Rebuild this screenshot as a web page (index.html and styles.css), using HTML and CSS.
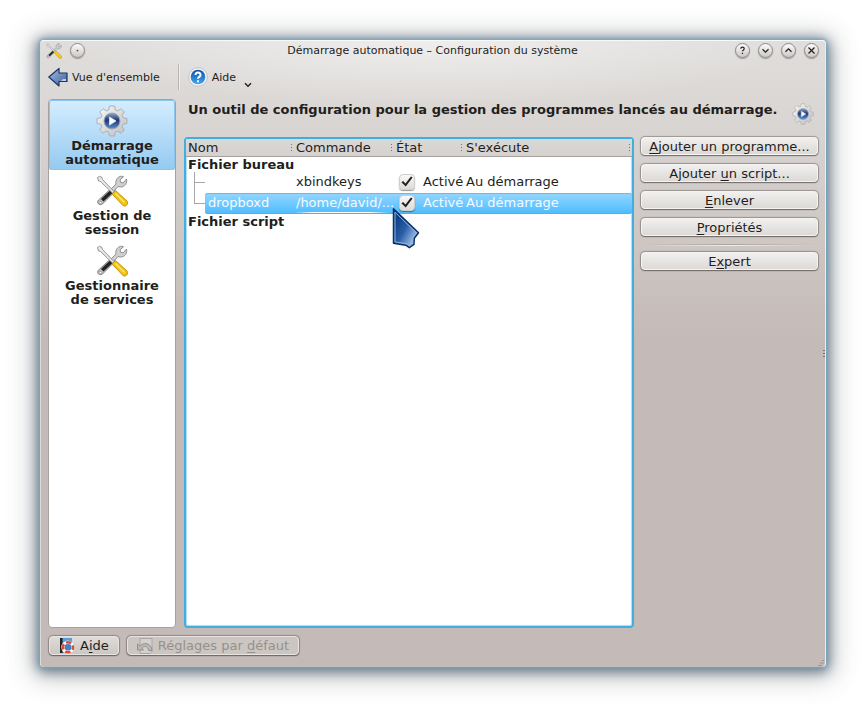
FILE: index.html
```html
<!DOCTYPE html>
<html lang="fr">
<head>
<meta charset="utf-8">
<title>Démarrage automatique – Configuration du système</title>
<link rel="stylesheet" href="styles.css">
</head>
<body>
<svg class="defs" aria-hidden="true">
  <defs>
    <linearGradient id="metal" x1="0" y1="0" x2="1" y2="1"><stop offset="0" stop-color="#fafafa"/><stop offset="1" stop-color="#bdbdbd"/></linearGradient>
    <linearGradient id="orb" x1="0" y1="0" x2="0" y2="1"><stop offset="0" stop-color="#8fa5c8"/><stop offset=".45" stop-color="#1d3a72"/><stop offset="1" stop-color="#5f8fd0"/></linearGradient>
    <linearGradient id="arrow" x1="0" y1="0" x2="1" y2="1"><stop offset="0" stop-color="#a8bfe2"/><stop offset="1" stop-color="#3a5d9c"/></linearGradient>
    <linearGradient id="help" x1="0" y1="0" x2="0" y2="1"><stop offset="0" stop-color="#0d4fa5"/><stop offset="1" stop-color="#3fa9f5"/></linearGradient>
    <linearGradient id="pointer" x1=".1" y1=".3" x2=".8" y2=".9"><stop offset="0" stop-color="#0d4288"/><stop offset=".45" stop-color="#2a5fa6"/><stop offset="1" stop-color="#a9c6ec"/></linearGradient>
  </defs>
  <symbol id="gear" viewBox="0 0 32 32">
    <path d="M13.500 1h5l.8 4 2.300 1 3.400-2.300L28.300 7 26 10.400l1 2.300 4 .8v5l-4 .8-1 2.300 2.300 3.400-3.300 3.300-3.400-2.300-2.300 1-.8 4h-5l-.8-4-2.300-1L7 28.300 3.700 25 6 21.600l-1-2.300-4-.8v-5l4-.8 1-2.300L3.700 7 7 3.700 10.400 6l2.300-1z" fill="url(#metal)" stroke="#aaa" stroke-width=".9" stroke-linejoin="round"/>
    <circle cx="16" cy="16" r="8" fill="url(#orb)" stroke="#9aa6ba" stroke-width="1"/>
    <path d="M13.500 12l6.500 4-6.500 4z" fill="#fff" stroke="#dfe8f5" stroke-width=".8" stroke-linejoin="round"/>
  </symbol>
  <symbol id="tools" viewBox="0 0 32 32">
    <path d="M3.500 29.500a2.600 2.600 0 0 1-1-4.500L15 13.500l3.500 3.500L6.500 29a2.600 2.600 0 0 1-3 .5z" fill="#bbb" stroke="#777" stroke-width=".8"/>
    <path d="M5 24l9-8.500 2.500 2.500-9 8.500z" fill="#222"/>
    <circle cx="4.300" cy="27.600" r="1.200" fill="#fff" stroke="#888" stroke-width=".6"/>
    <path d="M15 14l5-5c-.8-4 1.500-7.500 5.800-7.800l1.700.6-3.500 3 .6 2.500 2.500.7L30.500 4c1 4-1.500 8-6 8l-2.500-.5-4.500 5z" fill="#d0d0d0" stroke="#858585" stroke-width=".9" stroke-linejoin="round"/>
    <path d="M1.500 2.500l2-1.200 2.500 1.200.5 2L18.500 17 17 18.500 4.500 6.500l-2-.5z" fill="#e8e8e8" stroke="#8a8a8a" stroke-width=".9"/>
    <path d="M16 19l3.500-3.500L31 26c1.500 2.200 0 5.500-3.500 5z" fill="#f3c40c" stroke="#b88a08" stroke-width=".9"/>
    <path d="M19.500 18.500l9 9" stroke="#ffe97a" stroke-width="1.200"/>
  </symbol>
</svg>

<div class="window">
  <header class="titlebar">
    <div class="controls">
      <svg class="icon-16"><use href="#tools"/></svg>
      <button class="round" aria-label="Menu"><svg viewBox="0 0 15 15"><circle cx="7.500" cy="7.500" r=".3"/></svg></button>
    </div>
    <h1>Démarrage automatique – Configuration du système</h1>
    <div class="controls end">
      <button class="round" aria-label="Aide contextuelle"><svg viewBox="0 0 15 15"><path d="M5.500 5.500c0-2.500 4-2.500 4 0 0 1.300-2 1.500-2 3M7.500 10v1.500"/></svg></button>
      <button class="round" aria-label="Réduire"><svg viewBox="0 0 15 15"><path d="M4 6l3.500 3.500L11 6"/></svg></button>
      <button class="round" aria-label="Agrandir"><svg viewBox="0 0 15 15"><path d="M4 9l3.500-3.500L11 9"/></svg></button>
      <button class="round" aria-label="Fermer"><svg viewBox="0 0 15 15"><path d="M4 4l7 7M11 4l-7 7"/></svg></button>
    </div>
  </header>

  <nav class="toolbar">
    <button class="tool"><svg class="icon-20" viewBox="0 0 20 20"><path d="M.8 10L11 1.500V6h8v8.500h-8V19z" fill="url(#arrow)" stroke="#1d3565" stroke-width="1.200" stroke-linejoin="round"/><path d="M13 14l2-2h3v2z" fill="#b9cfee"/></svg>Vue d'ensemble</button>
    <span class="divider"></span>
    <button class="tool"><svg class="icon-20" viewBox="0 0 20 20"><circle cx="10" cy="10" r="9.300" fill="#f4f4f4" stroke="#b9b9b9" stroke-width=".8"/><circle cx="10" cy="10" r="7.300" fill="url(#help)"/><path d="M7.500 8c0-3.400 5-3.200 5 0 0 1.900-2.500 1.900-2.500 3.800M10 13.200v2" fill="none" stroke="#fff" stroke-width="2"/></svg>Aide<svg class="caret" viewBox="0 0 8 6"><path d="M1 1.200l3 3 3-3" fill="none" stroke="#222" stroke-width="1.500"/></svg></button>
  </nav>

  <div class="body">
    <nav class="sidebar">
      <a href="#demarrage" class="module current"><svg class="icon-32"><use href="#gear"/></svg>Démarrage automatique</a>
      <a href="#session" class="module"><svg class="icon-32"><use href="#tools"/></svg>Gestion de session</a>
      <a href="#services" class="module"><svg class="icon-32"><use href="#tools"/></svg>Gestionnaire de services</a>
    </nav>

    <main class="content">
      <div class="heading">
        <h2>Un outil de configuration pour la gestion des programmes lancés au démarrage.</h2>
        <svg class="icon-22"><use href="#gear"/></svg>
      </div>
      <div class="panes">
        <div class="list">
          <table>
            <colgroup><col class="c-name"><col class="c-command"><col class="c-state"><col></colgroup>
            <thead>
              <tr><th>Nom</th><th>Commande</th><th>État</th><th>S'exécute</th></tr>
            </thead>
            <tbody>
              <tr class="group"><th colspan="4">Fichier bureau</th></tr>
              <tr class="entry">
                <td class="branch"></td><td>xbindkeys</td>
                <td><label class="state"><input type="checkbox" checked>Activé</label></td><td>Au démarrage</td>
              </tr>
              <tr class="entry selected">
                <td class="branch last"><span class="name">dropboxd</span></td><td class="command">/home/david/...</td>
                <td><label class="state"><input type="checkbox" checked>Activé</label></td><td>Au démarrage</td>
              </tr>
              <tr class="group"><th colspan="4">Fichier script</th></tr>
            </tbody>
          </table>
          <svg class="pointer" viewBox="0 0 28 44"><path d="M1.500 1.800L26.500 25.700l-4.200 5.600-.3 6-4.700 3.400-3.500-2.500-12.300-2z" fill="url(#pointer)" stroke="#0b2f63" stroke-width="1.500" stroke-linejoin="round"/><path d="M3 5.200L24.400 25.800l-3.600 5-.3 5.700-3.200 2.300-2.900-2L3 34.900z" fill="none" stroke="#8fb2e0" stroke-width="1"/></svg>
        </div>
        <div class="actions">
          <button class="btn"><span><u>A</u>jouter un programme...</span></button>
          <button class="btn"><span>Ajouter <u>u</u>n script...</span></button>
          <button class="btn"><span><u>E</u>nlever</span></button>
          <button class="btn"><span><u>P</u>ropriétés</span></button>
          <hr>
          <button class="btn"><span>E<u>x</u>pert</span></button>
        </div>
      </div>
    </main>
  </div>

  <footer class="footer">
    <button class="btn"><svg class="icon-16" viewBox="0 0 16 16"><path d="M1 0h12v15H1z" fill="#5b9bdc"/><path d="M1 0h2.500v15H1z" fill="#222"/><circle cx="9" cy="9.200" r="5" fill="#3f82cc" stroke="#c9c9c9" stroke-width="3.400"/><circle cx="9" cy="9.200" r="5" fill="none" stroke="#fff" stroke-width="2.800"/><circle cx="9" cy="9.200" r="5" fill="none" stroke="#e04a35" stroke-width="2.600" stroke-dasharray="5.400 2.454" stroke-dashoffset="2.700"/></svg><span>A<u>i</u>de</span></button>
    <button class="btn" disabled><svg class="icon-16" viewBox="0 0 16 16"><path d="M3 .5h12v13l-2 2H3z" fill="#d4d0ce" stroke="#aaa6a3"/><path d="M.5 6v6h6L4.700 10c2.500-2.500 6-2 7 2.500H15C14.500 5.500 7 3.500 2.800 8z" fill="#bcb8b5" stroke="#8e8a87" stroke-width=".9" stroke-linejoin="round"/></svg><span>Réglages par <u>d</u>éfaut</span></button>
  </footer>
  <span class="edge"></span>
  <svg class="grip" viewBox="0 0 6 6"><path d="M5 0v1M3 2.500v1M5 2.500v1M1 5v1M3 5v1" stroke="#776f6c" stroke-width="1"/></svg>
</div>
</body>
</html>
```
FILE: styles.css
```css
* { box-sizing: border-box; }

body {
  margin: 0;
  padding: 40px;
  background: #fff;
  color: #221e1c;
  font: 13px/15px "DejaVu Sans", sans-serif;
}

button { font: inherit; color: inherit; }
h1, h2 { margin: 0; }
.defs { position: absolute; width: 0; height: 0; }
.icon-16 { width: 16px; height: 16px; }
.icon-20 { width: 20px; height: 20px; }
.icon-22 { width: 22px; height: 22px; }
.icon-32 { width: 32px; height: 32px; }

.window {
  position: relative;
  display: flex;
  flex-direction: column;
  min-height: calc(100vh - 80px);
  border-radius: 4px;
  border-top: 1px solid #f8f8f7;
  border-right: 1px solid #eeebea;
  border-left: 1px solid #dedad8;
  background:
    radial-gradient(ellipse 360px 64px at 50% 0, #efeeed, rgba(239, 238, 237, 0)),
    linear-gradient(#e0dedc, #d6d2cf 110px, #c4bab7 300px);
  box-shadow: 0 0 3px 1px #6eabc8, 0 2px 12px 3px rgba(35, 60, 85, .6), 0 3px 26px 8px rgba(60, 65, 70, .3);
}

.titlebar {
  display: grid;
  grid-template-columns: 1fr auto 1fr;
  align-items: center;
  height: 19px;
  padding: 0 6px 0 5px;
}
.titlebar h1 { font-size: 11px; font-weight: 400; }
.controls { display: flex; align-items: center; gap: 8px; }
.end { justify-content: flex-end; }
.round {
  width: 15px;
  height: 15px;
  padding: 0;
  border: 1px solid #8d8987;
  border-radius: 50%;
  background: linear-gradient(#fbfbfa, #cbc8c6);
  box-shadow: 0 1px 1px rgba(0, 0, 0, .3);
}
.round svg { display: block; width: 13px; height: 13px; fill: none; stroke: #222; stroke-width: 1.4px; }

.toolbar { display: flex; align-items: center; height: 34px; padding-left: 7px; font-size: 11px; }
.tool { display: flex; align-items: center; gap: 4px; padding: 0; border: 0; background: none; }
.divider { width: 2px; height: 26px; margin: 0 8px 0 18px; border-left: 1px solid #b9b5b2; border-right: 1px solid #efeeed; }
.caret { width: 8px; height: 6px; margin: 16px 0 0 4px; }

.body { flex: 1; display: flex; gap: 8px; padding: 5px 7px 8px; }

.sidebar {
  flex: 0 0 128px;
  border: 1px solid #a7a19e;
  border-radius: 4px;
  background: #fff;
}
.module {
  display: flex;
  flex-direction: column;
  align-items: center;
  height: 70px;
  padding: 5px 10px 0;
  border-radius: 3px;
  color: inherit;
  font-weight: 700;
  line-height: 14px;
  text-align: center;
  text-decoration: none;
}
.module svg { flex: none; margin-bottom: 2px; }
.current { background: linear-gradient(#d5edff, #94caf0); box-shadow: inset 0 0 0 1px #8cc5ee; }

.content { flex: 1; min-width: 0; display: flex; flex-direction: column; }
.heading { display: flex; justify-content: space-between; height: 38px; padding: 3px 4px 0; }
.heading h2 { font-size: 13px; line-height: 15px; }
.heading svg { flex: none; margin-top: 1px; }
.panes { flex: 1; display: flex; gap: 7px; }

.list {
  position: relative;
  flex: 1;
  border: 2px solid #43addf;
  border-radius: 4px;
  background: #fff;
  box-shadow: inset 0 0 1px 1px #a9def7;
}
table { width: 100%; table-layout: fixed; border-spacing: 0; }
.c-name { width: 108px; }
.c-command { width: 100px; }
.c-state { width: 70px; }
th, td { padding: 0 0 0 2px; text-align: left; white-space: nowrap; }
thead th {
  position: relative;
  height: 18px;
  border-bottom: 1px solid #a5a19f;
  background: linear-gradient(#cfdde3, #dad6d3 4px, #d5d1ce);
  font-weight: 400;
}
thead th::after {
  content: "";
  position: absolute;
  top: 5px;
  right: 2px;
  width: 1px;
  height: 8px;
  background: repeating-linear-gradient(#77716e 0 1px, transparent 1px 3px);
}
.group th { height: 15px; font-weight: 700; }
.entry td { height: 21px; padding-bottom: 2px; }
.entry .branch {
  padding: 0;
  background:
    linear-gradient(#aaa6a4, #aaa6a4) 8px 0 / 1px 100% no-repeat,
    linear-gradient(#aaa6a4, #aaa6a4) 8px 10px / 11px 1px no-repeat;
}
.entry .last {
  padding-left: 19px;
  background:
    linear-gradient(#aaa6a4, #aaa6a4) 8px 0 / 1px 10px no-repeat,
    linear-gradient(#aaa6a4, #aaa6a4) 8px 10px / 11px 1px no-repeat;
}
.selected { color: #f4fbff; }
.selected td:not(.branch), .name {
  background: linear-gradient(#94d6ff, #4dbcff);
  box-shadow: inset 0 1px #63bcf0, inset 0 -1px #4ab3f0;
}
.name { display: block; height: 21px; padding: 2px 0 0 3px; border-radius: 3px 0 0 3px; }
.selected td:last-child { border-radius: 0 3px 3px 0; }
.command { position: relative; }
.command::after {
  content: "";
  position: absolute;
  right: 5px;
  bottom: 1px;
  left: 0;
  height: 1px;
  background: linear-gradient(90deg, transparent, #fff 20%, #fff 80%, transparent);
}
.state { display: flex; align-items: center; gap: 8px; padding-left: 3px; }
input {
  appearance: none;
  flex: none;
  width: 16px;
  height: 16px;
  margin: 0;
  border: 1px solid #d0cdca;
  border-radius: 4px;
  background: linear-gradient(#f8f8f7, #dedbd9);
  box-shadow: 0 1px 1px rgba(0, 0, 0, .4);
}
input:checked::before {
  content: "";
  display: block;
  width: 14px;
  height: 14px;
  background: #222;
  clip-path: polygon(10% 55%, 22% 46%, 39% 65%, 78% 14%, 90% 21%, 41% 85%);
}
.pointer { position: absolute; top: 68px; left: 206px; width: 28px; height: 44px; }

.actions { flex: none; width: 177px; display: flex; flex-direction: column; gap: 9px; }
.actions hr {
  width: 100%;
  height: 2px;
  margin: -1px 0 -3px;
  border: 0;
  background: linear-gradient(90deg, transparent, #efedec 50%, transparent) 0 1px / 100% 1px no-repeat,
    linear-gradient(90deg, transparent, #aaa4a1 50%, transparent) 0 0 / 100% 1px no-repeat;
}
.btn {
  display: flex;
  align-items: center;
  justify-content: center;
  gap: 5px;
  height: 18px;
  padding: 0 4px;
  border: 1px solid #f5f4f3;
  border-radius: 4px;
  background: linear-gradient(#f1f0ef, #dcd9d6);
  box-shadow: 0 0 1px 1px rgba(105, 98, 94, .55), 0 1px 1px rgba(0, 0, 0, .4);
  white-space: nowrap;
}
u { text-underline-offset: 2px; text-decoration-thickness: 1px; text-decoration-skip-ink: none; }

.footer { display: flex; gap: 8px; padding: 0 8px 12px; }
.footer .btn { height: 19px; padding: 0 9px; background: linear-gradient(#dedbd9, #ccc7c3); border-color: #e6e3e1; }
.footer .btn:disabled { color: #96908c; background: #ccc6c2; }
.grip { position: absolute; right: 1px; bottom: 1px; width: 6px; height: 6px; }
.edge {
  position: absolute;
  top: 50%;
  right: 0;
  width: 2px;
  height: 7px;
  margin-top: -4px;
  background: repeating-linear-gradient(#77716e 0 1px, transparent 1px 3px);
}
```
